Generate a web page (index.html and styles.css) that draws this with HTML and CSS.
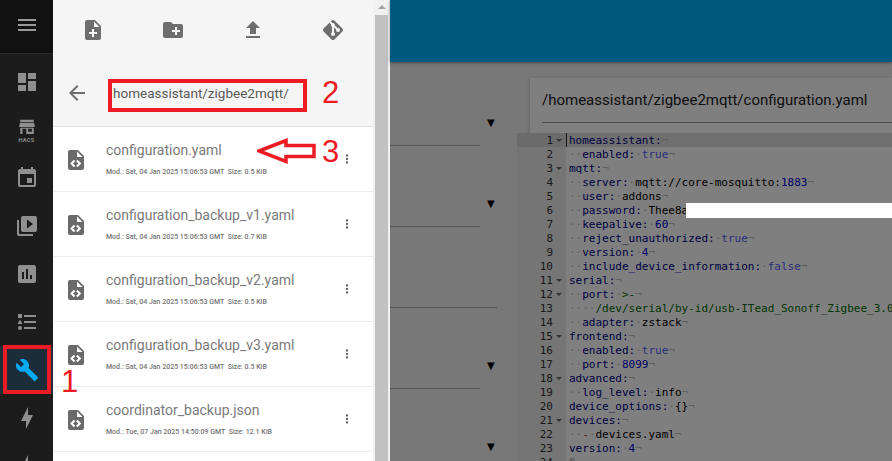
FILE: index.html
```html
<!DOCTYPE html>
<html lang="en">
<head>
<meta charset="utf-8">
<title>File editor</title>
<link rel="stylesheet" href="styles.css">
</head>
<body>
<div class="app">
  <nav class="sidebar">
    <div class="side-top"><svg class="ico menu" viewBox="0 0 24 24"><path d="M3,6H21V8H3V6M3,11H21V13H3V11M3,16H21V18H3V16Z"/></svg></div>
    <div class="side-list">
      <div class="side-item"><svg class="ico" viewBox="0 0 24 24"><path d="M13,3V9H21V3M13,21H21V11H13M3,21H11V15H3M3,13H11V3H3V13Z"/></svg></div>
      <div class="side-item"><svg class="ico hacs" viewBox="0 0 24 24"><path d="M3 1H21V4H3ZM2.5 5H21.5L22.5 10.5H1.500ZM3 11.500H21V20H3ZM6 13V20H11V13ZM13.500 13V17H18.500V13Z" fill-rule="evenodd"/></svg><span class="hacs-label">HACS</span></div>
      <div class="side-item"><svg class="ico" viewBox="0 0 24 24"><path d="M19,19H5V8H19M16,1V3H8V1H6V3H5C3.89,3 3,3.89 3,5V19A2,2 0 0,0 5,21H19A2,2 0 0,0 21,19V5C21,3.89 20.1,3 19,3H18V1M17,12H12V17H17V12Z"/></svg></div>
      <div class="side-item"><svg class="ico" viewBox="0 0 24 24"><path d="M4 6H2V20C2 21.1 2.9 22 4 22H18V20H4V6M20 2H8C6.9 2 6 2.9 6 4V16C6 17.1 6.9 18 8 18H20C21.1 18 22 17.1 22 16V4C22 2.9 21.1 2 20 2M12 14.500V5.500L18 10L12 14.500Z"/></svg></div>
      <div class="side-item"><svg class="ico" viewBox="0 0 24 24"><path d="M19 3H5C3.900 3 3 3.900 3 5V19C3 20.100 3.900 21 5 21H19C20.100 21 21 20.100 21 19V5C21 3.900 20.100 3 19 3M9 17H7V10H9V17M13 17H11V7H13V17M17 17H15V13H17V17Z"/></svg></div>
      <div class="side-item"><svg class="ico" viewBox="0 0 24 24"><path d="M5,9.500L7.500,14H2.500L5,9.500M3,4H7V8H3V4M5,20A2,2 0 0,0 7,18A2,2 0 0,0 5,16A2,2 0 0,0 3,18A2,2 0 0,0 5,20M9,5V7H21V5H9M9,19H21V17H9V19M9,13H21V11H9V13Z"/></svg></div>
      <div class="side-item selected"><svg class="ico" viewBox="0 0 24 24"><path d="M22.700,19L13.600,9.900C14.500,7.600 14,4.900 12.100,3C10.100,1 7.100,0.600 4.700,1.700L9,6L6,9L1.600,4.700C0.400,7.100 0.900,10.100 2.900,12.100C4.800,14 7.500,14.500 9.800,13.600L18.900,22.700C19.300,23.100 19.900,23.100 20.300,22.700L22.600,20.400C23.100,20 23.100,19.300 22.700,19Z"/></svg></div>
      <div class="side-item"><svg class="ico" viewBox="0 0 24 24"><path d="M11,15H6L13,1V9H18L11,23V15Z"/></svg></div>
      <div class="side-item"><svg class="ico" viewBox="0 0 24 24"><path d="M11,15H6L13,1V9H18L11,23V15Z"/></svg></div>
    </div>
  </nav>

  <aside class="panel">
    <div class="panel-actions">
      <div class="action"><svg class="ico" viewBox="0 0 24 24"><path d="M14 2H6c-1.100 0-1.990.9-1.990 2L4 20c0 1.100.89 2 1.990 2H18c1.100 0 2-.9 2-2V8l-6-6zm2 14h-3v3h-2v-3H8v-2h3v-3h2v3h3v2zm-3-7V3.500L18.500 9H13z"/></svg></div>
      <div class="action"><svg class="ico" viewBox="0 0 24 24"><path d="M20 6h-8l-2-2H4c-1.110 0-1.990.89-1.990 2L2 18c0 1.110.89 2 2 2h16c1.110 0 2-.89 2-2V8c0-1.110-.89-2-2-2zm-1 8h-3v3h-2v-3h-3v-2h3V9h2v3h3v2z"/></svg></div>
      <div class="action"><svg class="ico" viewBox="0 0 24 24"><path d="M9 16h6v-6h4l-7-7-7 7h4zm-4 2h14v2H5z"/></svg></div>
      <div class="action"><svg class="ico" viewBox="0 0 24 24"><path d="M2.600,10.590L8.380,4.800L10.070,6.500C9.830,7.350 10.220,8.280 11,8.730V14.270C10.400,14.610 10,15.260 10,16A2,2 0 0,0 12,18A2,2 0 0,0 14,16C14,15.260 13.600,14.610 13,14.270V9.410L15.070,11.500C15,11.650 15,11.820 15,12A2,2 0 0,0 17,14A2,2 0 0,0 19,12A2,2 0 0,0 17,10C16.820,10 16.650,10 16.500,10.070L13.930,7.500C14.190,6.570 13.710,5.550 12.780,5.160C12.350,5 11.900,4.960 11.500,5.070L9.800,3.380L10.590,2.600C11.370,1.820 12.630,1.820 13.410,2.600L21.400,10.590C22.180,11.370 22.180,12.630 21.400,13.410L13.410,21.400C12.630,22.180 11.370,22.180 10.590,21.400L2.600,13.410C1.820,12.630 1.820,11.370 2.600,10.590Z"/></svg></div>
    </div>
    <div class="panel-path">
      <svg class="ico back" viewBox="0 0 24 24"><path d="M20 11H7.830l5.590-5.590L12 4l-8 8 8 8 1.410-1.410L7.830 13H20v-2z"/></svg>
      <span class="path-text">homeassistant/zigbee2mqtt/</span>
    </div>
    <ul class="files">
      <li class="file">
        <svg class="ico file-ico" viewBox="0 0 24 24"><path d="M13,9H18.500L13,3.500V9M6,2H14L20,8V20A2,2 0 0,1 18,22H6C4.890,22 4,21.100 4,20V4C4,2.890 4.890,2 6,2M6.120,15.500L9.860,19.240L11.280,17.830L8.950,15.500L11.280,13.170L9.860,11.760L6.120,15.500M17.280,15.500L13.540,11.760L12.120,13.170L14.450,15.500L12.120,17.830L13.540,19.240L17.280,15.500Z"/></svg>
        <div class="file-text"><div class="file-name">configuration.yaml</div><div class="file-meta">Mod.: Sat, 04 Jan 2025 15:06:53 GMT&nbsp; Size: 0.5 KiB</div></div>
        <svg class="ico dots" viewBox="0 0 24 24"><path d="M12,16A2,2 0 0,1 14,18A2,2 0 0,1 12,20A2,2 0 0,1 10,18A2,2 0 0,1 12,16M12,10A2,2 0 0,1 14,12A2,2 0 0,1 12,14A2,2 0 0,1 10,12A2,2 0 0,1 12,10M12,4A2,2 0 0,1 14,6A2,2 0 0,1 12,8A2,2 0 0,1 10,6A2,2 0 0,1 12,4Z"/></svg>
      </li>
      <li class="file">
        <svg class="ico file-ico" viewBox="0 0 24 24"><path d="M13,9H18.500L13,3.500V9M6,2H14L20,8V20A2,2 0 0,1 18,22H6C4.890,22 4,21.100 4,20V4C4,2.890 4.890,2 6,2M6.120,15.500L9.860,19.240L11.280,17.830L8.950,15.500L11.280,13.170L9.860,11.760L6.120,15.500M17.280,15.500L13.540,11.760L12.120,13.170L14.450,15.500L12.120,17.830L13.540,19.240L17.280,15.500Z"/></svg>
        <div class="file-text"><div class="file-name">configuration_backup_v1.yaml</div><div class="file-meta">Mod.: Sat, 04 Jan 2025 15:06:53 GMT&nbsp; Size: 0.7 KiB</div></div>
        <svg class="ico dots" viewBox="0 0 24 24"><path d="M12,16A2,2 0 0,1 14,18A2,2 0 0,1 12,20A2,2 0 0,1 10,18A2,2 0 0,1 12,16M12,10A2,2 0 0,1 14,12A2,2 0 0,1 12,14A2,2 0 0,1 10,12A2,2 0 0,1 12,10M12,4A2,2 0 0,1 14,6A2,2 0 0,1 12,8A2,2 0 0,1 10,6A2,2 0 0,1 12,4Z"/></svg>
      </li>
      <li class="file">
        <svg class="ico file-ico" viewBox="0 0 24 24"><path d="M13,9H18.500L13,3.500V9M6,2H14L20,8V20A2,2 0 0,1 18,22H6C4.890,22 4,21.100 4,20V4C4,2.890 4.890,2 6,2M6.120,15.500L9.860,19.240L11.280,17.830L8.950,15.500L11.280,13.170L9.860,11.760L6.120,15.500M17.280,15.500L13.540,11.760L12.120,13.170L14.450,15.500L12.120,17.830L13.540,19.240L17.280,15.500Z"/></svg>
        <div class="file-text"><div class="file-name">configuration_backup_v2.yaml</div><div class="file-meta">Mod.: Sat, 04 Jan 2025 15:06:53 GMT&nbsp; Size: 0.5 KiB</div></div>
        <svg class="ico dots" viewBox="0 0 24 24"><path d="M12,16A2,2 0 0,1 14,18A2,2 0 0,1 12,20A2,2 0 0,1 10,18A2,2 0 0,1 12,16M12,10A2,2 0 0,1 14,12A2,2 0 0,1 12,14A2,2 0 0,1 10,12A2,2 0 0,1 12,10M12,4A2,2 0 0,1 14,6A2,2 0 0,1 12,8A2,2 0 0,1 10,6A2,2 0 0,1 12,4Z"/></svg>
      </li>
      <li class="file">
        <svg class="ico file-ico" viewBox="0 0 24 24"><path d="M13,9H18.500L13,3.500V9M6,2H14L20,8V20A2,2 0 0,1 18,22H6C4.890,22 4,21.100 4,20V4C4,2.890 4.890,2 6,2M6.120,15.500L9.860,19.240L11.280,17.830L8.950,15.500L11.280,13.170L9.860,11.760L6.120,15.500M17.280,15.500L13.540,11.760L12.120,13.170L14.450,15.500L12.120,17.830L13.540,19.240L17.280,15.500Z"/></svg>
        <div class="file-text"><div class="file-name">configuration_backup_v3.yaml</div><div class="file-meta">Mod.: Sat, 04 Jan 2025 15:06:53 GMT&nbsp; Size: 0.5 KiB</div></div>
        <svg class="ico dots" viewBox="0 0 24 24"><path d="M12,16A2,2 0 0,1 14,18A2,2 0 0,1 12,20A2,2 0 0,1 10,18A2,2 0 0,1 12,16M12,10A2,2 0 0,1 14,12A2,2 0 0,1 12,14A2,2 0 0,1 10,12A2,2 0 0,1 12,10M12,4A2,2 0 0,1 14,6A2,2 0 0,1 12,8A2,2 0 0,1 10,6A2,2 0 0,1 12,4Z"/></svg>
      </li>
      <li class="file">
        <svg class="ico file-ico" viewBox="0 0 24 24"><path d="M13,9H18.500L13,3.500V9M6,2H14L20,8V20A2,2 0 0,1 18,22H6C4.890,22 4,21.100 4,20V4C4,2.890 4.890,2 6,2M6.120,15.500L9.860,19.240L11.280,17.830L8.950,15.500L11.280,13.170L9.860,11.760L6.120,15.500M17.280,15.500L13.540,11.760L12.120,13.170L14.450,15.500L12.120,17.830L13.540,19.240L17.280,15.500Z"/></svg>
        <div class="file-text"><div class="file-name">coordinator_backup.json</div><div class="file-meta">Mod.: Tue, 07 Jan 2025 14:50:09 GMT&nbsp; Size: 12.1 KiB</div></div>
        <svg class="ico dots" viewBox="0 0 24 24"><path d="M12,16A2,2 0 0,1 14,18A2,2 0 0,1 12,20A2,2 0 0,1 10,18A2,2 0 0,1 12,16M12,10A2,2 0 0,1 14,12A2,2 0 0,1 12,14A2,2 0 0,1 10,12A2,2 0 0,1 12,10M12,4A2,2 0 0,1 14,6A2,2 0 0,1 12,8A2,2 0 0,1 10,6A2,2 0 0,1 12,4Z"/></svg>
      </li>
    </ul>
  </aside>

  <div class="scrollbar"><div class="scroll-up"></div><div class="scroll-thumb"></div></div>

  <main class="main">
    <header class="main-bar"></header>
    <div class="main-body">
      <div class="fields">
        <div class="field"><div class="field-line"></div><span class="caret">▼</span></div>
        <div class="field"><div class="field-line"></div><span class="caret">▼</span></div>
        <div class="field"><div class="field-line wide"></div></div>
        <div class="field"><div class="field-line"></div><span class="caret">▼</span></div>
        <div class="field"><div class="field-line"></div><span class="caret">▼</span></div>
      </div>
      <section class="card">
        <div class="card-title">/homeassistant/zigbee2mqtt/configuration.yaml</div>
        <div class="editor">
          <div class="gutter">
            <div class="gl active fold">1</div><div class="gl">2</div><div class="gl fold">3</div><div class="gl">4</div><div class="gl">5</div><div class="gl">6</div><div class="gl">7</div><div class="gl">8</div><div class="gl">9</div><div class="gl">10</div><div class="gl fold">11</div><div class="gl fold">12</div><div class="gl">13</div><div class="gl">14</div><div class="gl fold">15</div><div class="gl">16</div><div class="gl">17</div><div class="gl fold">18</div><div class="gl">19</div><div class="gl">20</div><div class="gl fold">21</div><div class="gl">22</div><div class="gl">23</div><div class="gl">24</div>
          </div>
          <div class="code">
            <div class="cl active"><span class="k">homeassistant:</span><span class="i">¬</span></div>
            <div class="cl"><span class="i">··</span><span class="k">enabled:</span><span class="i">·</span><span class="v">true</span><span class="i">¬</span></div>
            <div class="cl"><span class="k">mqtt:</span><span class="i">¬</span></div>
            <div class="cl"><span class="i">··</span><span class="k">server:</span><span class="i">·</span>mqtt://core-mosquitto:<span class="n">1883</span><span class="i">¬</span></div>
            <div class="cl"><span class="i">··</span><span class="k">user:</span><span class="i">·</span>addons<span class="i">¬</span></div>
            <div class="cl"><span class="i">··</span><span class="k">password:</span><span class="i">·</span>Thee8a</div>
            <div class="cl"><span class="i">··</span><span class="k">keepalive:</span><span class="i">·</span><span class="n">60</span><span class="i">¬</span></div>
            <div class="cl"><span class="i">··</span><span class="k">reject_unauthorized:</span><span class="i">·</span><span class="v">true</span><span class="i">¬</span></div>
            <div class="cl"><span class="i">··</span><span class="k">version:</span><span class="i">·</span><span class="n">4</span><span class="i">¬</span></div>
            <div class="cl"><span class="i">··</span><span class="k">include_device_information:</span><span class="i">·</span><span class="v">false</span><span class="i">¬</span></div>
            <div class="cl"><span class="k">serial:</span><span class="i">¬</span></div>
            <div class="cl"><span class="i">··</span><span class="k">port:</span><span class="i">·</span><span class="s">&gt;-</span><span class="i">¬</span></div>
            <div class="cl"><span class="i">····</span><span class="s">/dev/serial/by-id/usb-ITead_Sonoff_Zigbee_3.0</span></div>
            <div class="cl"><span class="i">··</span><span class="k">adapter:</span><span class="i">·</span>zstack<span class="i">¬</span></div>
            <div class="cl"><span class="k">frontend:</span><span class="i">¬</span></div>
            <div class="cl"><span class="i">··</span><span class="k">enabled:</span><span class="i">·</span><span class="v">true</span><span class="i">¬</span></div>
            <div class="cl"><span class="i">··</span><span class="k">port:</span><span class="i">·</span><span class="n">8099</span><span class="i">¬</span></div>
            <div class="cl"><span class="k">advanced:</span><span class="i">¬</span></div>
            <div class="cl"><span class="i">··</span><span class="k">log_level:</span><span class="i">·</span>info<span class="i">¬</span></div>
            <div class="cl"><span class="k">device_options:</span><span class="i">·</span>{}<span class="i">¬</span></div>
            <div class="cl"><span class="k">devices:</span><span class="i">¬</span></div>
            <div class="cl"><span class="i">··</span><span class="d">-</span><span class="i">·</span>devices.yaml<span class="i">¬</span></div>
            <div class="cl"><span class="k">version:</span><span class="i">·</span><span class="n">4</span><span class="i">¬</span></div>
            <div class="cl"><span class="i">¶</span></div>
          </div>
        </div>
      </section>
    </div>
    <div class="dim"></div>
    <div class="mask"></div>
  </main>

  <div class="mark mark-nav"></div>
  <div class="mark mark-path"></div>
  <span class="num num-1">1</span>
  <span class="num num-2">2</span>
  <span class="num num-3">3</span>
  <svg class="mark-arrow" viewBox="0 0 60 26"><path d="M2 13L29 2.500V7.500H57V18.500H29V23.500Z"/></svg>
</div>
</body>
</html>
```
FILE: styles.css
```css
* { box-sizing: border-box; }
html, body { margin: 0; padding: 0; }
body { background: #fff; font-family: Roboto, sans-serif; }
.app { position: relative; display: flex; width: 892px; height: 461px; overflow: hidden; }
.ico { display: block; width: 24px; height: 24px; fill: currentColor; flex: none; }

.sidebar { width: 53px; flex: none; background: #1c1c1c; color: #8f8f8f; }
.side-top { height: 54px; background: #111; border-bottom: 1px solid #2b2b2b; display: flex; align-items: center; justify-content: center; padding-bottom: 3px; color: #9a9a9a; }
.side-list { padding-top: 4px; }
.side-item { height: 48px; display: flex; flex-direction: column; align-items: center; justify-content: center; }
.side-item.selected { color: #03a9f4; background: #1b2d38; }
.hacs { width: 18px; height: 18px; margin-top: 1px; }
.hacs-label { font-size: 5.500px; font-weight: 700; line-height: 6px; letter-spacing: .4px; }

.panel { width: 320px; flex: none; background: #fff; color: #757575; }
.panel-actions { display: flex; height: 60px; background: #f5f5f5; }
.action { width: 80px; display: flex; align-items: center; justify-content: center; color: #6e6e6e; }
.panel-path { height: 67px; background: #f5f5f5; border-bottom: 1px solid #e3e3e3; display: flex; align-items: center; padding: 0 0 0 12px; color: #6e6e6e; }
.path-text { margin-left: 24px; font-size: 13.500px; color: #5a5a5a; }
.files { list-style: none; margin: 0; padding: 0; }
.file { height: 65px; border-bottom: 1px solid #ececec; display: flex; align-items: center; padding: 0 19px 0 11px; }
.file-ico { color: #6a6a6a; margin-top: 2px; }
.file-text { flex: 1; margin-left: 18px; }
.file-name { font-size: 14px; line-height: 18px; color: #7a7a7a; margin-top: -1px; }
.file-meta { font-size: 7px; font-weight: 500; line-height: 10px; margin-top: 8px; color: #757575; white-space: nowrap; }
.dots { width: 14px; height: 14px; color: #5f5f5f; }

.scrollbar { width: 17px; flex: none; background: #f1f1f1; position: relative; padding: 15px 2px 0; }
.scroll-thumb { height: 100%; background: #c1c1c1; }
.scroll-up { position: absolute; top: 5px; left: 5px; border: 4px solid transparent; border-top: 0; border-bottom: 4px solid #a3a3a3; }

.main { position: relative; flex: 1; min-width: 0; background: #f0f0f0; display: flex; flex-direction: column; }
.main-bar { height: 62px; flex: none; background: #00b4ff; box-shadow: 0 1px 3px rgba(0,0,0,.4); }
.main-body { flex: 1; display: flex; min-height: 0; }
.fields { width: 140px; flex: none; padding-top: 3px; }
.field { position: relative; height: 81px; display: flex; align-items: flex-end; }
.field-line { width: 90px; height: 1px; background: #aaa; }
.field-line.wide { width: 107px; }
.caret { font-family: "DejaVu Sans", sans-serif; font-size: 10px; line-height: 12px; color: #000; margin: 0 0 17px -3px; transform: translateX(10px); }

.card { flex: 1; min-width: 0; margin-top: 16px; padding-left: 12px; background: #fff; box-shadow: -1px 0 3px rgba(0,0,0,.12); display: flex; flex-direction: column; }
.card-title { height: 45px; flex: none; border-bottom: 1px solid #9a9a9a; font-size: 15px; line-height: 44px; color: #222; white-space: nowrap; }
.editor { flex: 1; min-height: 0; margin: 10px 0 0 -25px; display: flex; background: #fff; overflow: hidden; font-family: "DejaVu Sans Mono", monospace; font-size: 11px; line-height: 14px; }
.gutter { width: 49px; flex: none; background: #ebebeb; color: #333; }
.gl { position: relative; height: 14px; padding: 1px 13px 0 0; text-align: right; }
.gl.active { background: #d6d6d6; }
.gl.fold::after { content: ""; position: absolute; right: 4px; top: 6px; border: 3px solid transparent; border-bottom: 0; border-top: 3px solid #666; }
.code { flex: 1; min-width: 0; color: #000; }
.cl { height: 14px; padding: 1px 0 0 3px; white-space: pre; }
.cl.active { background: #dfdfdf; box-shadow: inset 1px 0 0 #333; }
.k { color: #000085; }
.v { color: #585cf6; }
.n { color: #0000cd; }
.s { color: #036a07; }
.d { color: #b5391a; }
.i { color: #bfbfbf; }

.dim { position: absolute; inset: 0; background: rgba(0,0,0,.5); }
.mask { position: absolute; left: 296px; top: 203px; right: 0; height: 15px; background: #fff; }

.mark { position: absolute; border: 4px solid #ed1c24; }
.mark-nav { left: 3px; top: 345px; width: 48px; height: 49px; }
.mark-path { left: 108px; top: 79px; width: 199px; height: 33px; }
.num { position: absolute; color: #ed1c24; font-family: "Liberation Sans", sans-serif; font-size: 31px; line-height: 36px; }
.num-1 { left: 61px; top: 364px; }
.num-2 { left: 322px; top: 75px; }
.num-3 { left: 322px; top: 134px; }
.mark-arrow { position: absolute; left: 257px; top: 138px; width: 60px; height: 26px; fill: none; stroke: #ed1c24; stroke-width: 3.500px; }
```
